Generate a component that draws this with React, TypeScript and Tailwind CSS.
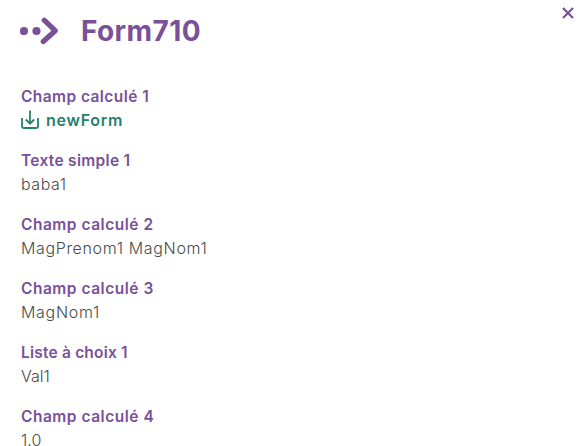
import React from "react";

type Field = { label: string; value: string; labelTracking: string; valueTracking: string; file?: boolean };

const fields: Field[] = [
  { label: "Champ calculé 1", value: "newForm", labelTracking: "tracking-[0.43px]", valueTracking: "tracking-[0.75px]", file: true },
  { label: "Texte simple 1", value: "baba1", labelTracking: "tracking-[0.3px]", valueTracking: "tracking-[0.55px]" },
  { label: "Champ calculé 2", value: "MagPrenom1 MagNom1", labelTracking: "tracking-[0.52px]", valueTracking: "tracking-[0.65px]" },
  { label: "Champ calculé 3", value: "MagNom1", labelTracking: "tracking-[0.52px]", valueTracking: "tracking-[0.7px]" },
  { label: "Liste à choix 1", value: "Val1", labelTracking: "tracking-[0.2px]", valueTracking: "tracking-[0px]" },
  { label: "Champ calculé 4", value: "1.0", labelTracking: "tracking-[0.52px]", valueTracking: "tracking-[0px]" },
];

function ArrowLogo() {
  return (
    <svg width="40" height="28" viewBox="0 0 40 28" className="shrink-0" fill="#7a5098">
      <circle cx="4" cy="14" r="4.1" />
      <circle cx="16.5" cy="14" r="4.1" />
      <path d="M24.2 3.2 35.2 13.7 23.3 24.5" fill="none" stroke="#7a5098" strokeWidth="5.2" strokeLinecap="round" strokeLinejoin="round" />
    </svg>
  );
}

function DownloadIcon() {
  return (
    <svg width="18" height="20" viewBox="0 0 18 20" fill="none" stroke="#23826a" strokeWidth="1.8" className="mr-[7px] shrink-0">
      <path d="M1 8V16.5Q1 18 2.5 18H15.5Q17 18 17 16.5V8M9 0.5V13.5M4.8 9.5 9 13.7 13.2 9.5" />
    </svg>
  );
}

export default function App() {
  return (
    <main className="min-h-[446px] bg-white font-['Inter',sans-serif]">
      <header className="flex h-[85px] items-start pl-5 pr-[6px] text-[#7a5098]">
        <div className="pt-[17px]"><ArrowLogo /></div>
        <h1 className="ml-[21px] mt-[13px] text-[28px] font-bold leading-9 tracking-[0.4px]">Form710</h1>
        <button aria-label="Fermer" className="ml-auto mt-[7px]">
          <svg width="12" height="12" viewBox="0 0 12 12" stroke="currentColor" strokeWidth="2.2"><path d="m1 1 10 10M11 1 1 11" /></svg>
        </button>
      </header>
      <dl className="flex h-[361px] flex-col gap-4 overflow-hidden pl-[21px]">
        {fields.map((f) => (
          <div key={f.label} className="shrink-0">
            <dt className={`text-[15.5px] font-semibold leading-6 text-[#7a5098] ${f.labelTracking}`}>{f.label}</dt>
            {f.file ? (
              <dd className={`flex h-6 items-center pb-0.5 text-[16px] font-semibold leading-[22px] text-[#23826a] ${f.valueTracking}`}><DownloadIcon /><span>{f.value}</span></dd>
            ) : (
              <dd className={`pb-0.5 text-[16px] font-light leading-[22px] text-[#4a4a4a] ${f.valueTracking}`}>{f.value}</dd>
            )}
          </div>
        ))}
      </dl>
    </main>
  );
}
